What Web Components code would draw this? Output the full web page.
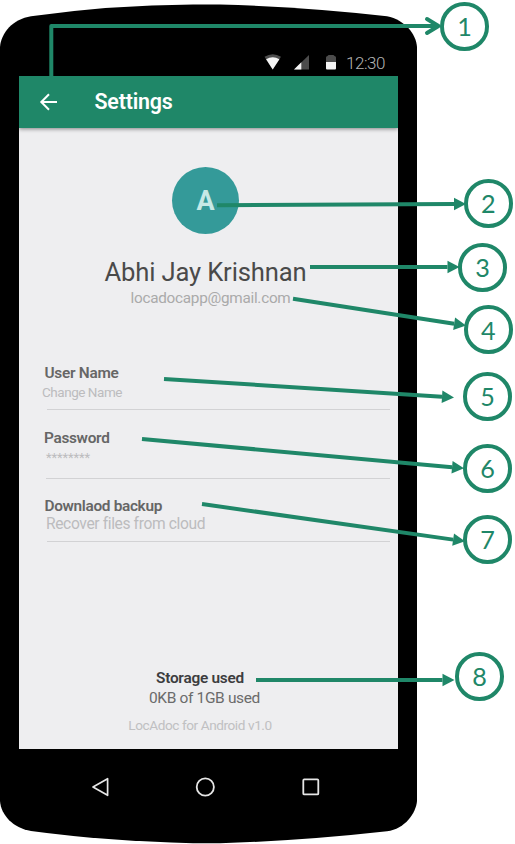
<!DOCTYPE html>
<html lang="en"><head><meta charset="utf-8"><title>Settings</title>
<style>
html,body{margin:0;background:#fff}
body{width:515px;height:844px;overflow:hidden;font-family:Roboto,"Noto Sans",sans-serif}
</style></head><body>
<settings-guide></settings-guide>
<script>
const define=(name,html,ready)=>customElements.define(name,class extends HTMLElement{
  connectedCallback(){
    if(this.shadowRoot)return;
    this.attachShadow({mode:'open'}).innerHTML=html;
    if(ready)ready.call(this);
  }
});
const ctx=document.createElement('canvas').getContext('2d');

/* One line of text tracked to a given width */
define('type-line',`<style>:host{display:block;white-space:nowrap;flex:none}</style><slot></slot>`,function(){
  const s=+this.getAttribute('size'),w=+this.getAttribute('width'),wt=this.getAttribute('weight')||400;
  const t=this.textContent;
  ctx.font=`${wt} ${s}px Roboto`;
  this.style.fontSize=s+'px';this.style.fontWeight=wt;
  if(w)this.style.letterSpacing=((w-ctx.measureText(t).width)/t.length).toFixed(3)+'px';
});

define('status-bar',`<style>
:host{display:flex;height:26px;align-items:center;justify-content:flex-end;box-sizing:border-box;padding-right:13px;color:#b4b4b4}
svg{display:block;flex:none;margin-right:6px}
type-line{line-height:26px}</style>
<svg width="76" height="26" viewBox="0 0 76 26">
<path d="M.5 6.8Q8.7 1.5 17 6.8L8.7 19.5Z" fill="#4c4c4c"/><path d="M2.1 9.2Q8.7 5.4 15.4 9.2L8.7 19.5Z" fill="#f4f4f4"/>
<path d="M30 19.5L45 5V19.5Z" fill="#4c4c4c"/><path d="M30 19.5L37.3 12.3V19.5Z" fill="#f4f4f4"/>
<path d="M62 12V7.5Q62 6 63.5 6Q64 5 65 5H69Q70 5 70.5 6Q72 6 72 7.5V12Z" fill="#4c4c4c"/><path d="M62 12H72V18.5Q72 19.5 71 19.5H63Q62 19.5 62 18.5Z" fill="#f4f4f4"/></svg>
<type-line size="17" weight="300" width="39">12:30</type-line>`);

define('app-bar',`<style>
:host{display:flex;height:52.5px;align-items:center;background:#1f8768;box-shadow:0 1px 4px rgba(0,0,0,.45);color:#fff;position:relative}
svg{display:block;margin:0 35.5px 0 20px}type-line{line-height:53px}</style>
<svg width="20" height="20" viewBox="0 0 20 20" fill="none" stroke="#fff" stroke-width="2"><path d="M18 10H3M10 2.3L2.3 10L10 17.7"/></svg>
<type-line size="21.4" weight="600" width="78">Settings</type-line>`);

define('user-profile',`<style>
:host{display:flex;flex-direction:column;align-items:center;padding:39px 6px 0 0}
.avatar{width:67.4px;height:67.4px;border-radius:50%;background:#349a99;display:flex;align-items:center;justify-content:center;color:#c6e9e6;font-size:27px;font-weight:700}
.name{margin-top:22.6px;line-height:30px;color:#4a4a4a}.mail{margin:1.4px 0 0 10px;line-height:20px;color:#aaa}</style>
<div class="avatar">A</div>
<type-line class="name" size="25.6" width="202">Abhi Jay Krishnan</type-line>
<type-line class="mail" size="15.3" width="160">locadocapp@gmail.com</type-line>`);

define('setting-row',`<style>
:host{display:block;margin-left:var(--rule,28px);margin-right:8px;border-bottom:1px solid #d2d2d4;color:#666;box-sizing:border-box}
::slotted([slot=title]){line-height:18px;margin-left:var(--title,-3px)}
::slotted([slot=hint]){line-height:18px;color:#bcbcbe;margin-left:var(--hint,0)}</style>
<slot name="title"></slot><slot name="hint"></slot>`);

define('storage-info',`<style>
:host{display:flex;flex-direction:column;align-items:center;padding-top:127px;line-height:18px}
type-line{line-height:18px}.a{color:#3c3c3e;margin-right:17px}.b{color:#6b6b6b;margin:2px 8px 9px 0}.c{color:#c0c0c2;margin-right:17px}</style>
<type-line class="a" size="15.4" weight="600" width="88">Storage used</type-line>
<type-line class="b" size="15.5" width="111">0KB of 1GB used</type-line>
<type-line class="c" size="13.6" width="143.5">LocAdoc for Android v1.0</type-line>`);

define('nav-bar',`<style>:host{display:flex;justify-content:space-between;padding:27px 77px 0 71px}svg{display:block}</style>
<svg width="20" height="22" viewBox="0 0 20 22" fill="none" stroke="#e6e6e6" stroke-width="1.7" stroke-linejoin="round"><path d="M17.6 2.7V19.3L3 11Z"/></svg>
<svg width="22" height="22" viewBox="0 0 22 22" fill="none" stroke="#e6e6e6" stroke-width="1.8"><circle cx="11.3" cy="11" r="8.6"/></svg>
<svg width="22" height="22" viewBox="0 0 22 22" fill="none" stroke="#e6e6e6" stroke-width="1.8"><rect x="4.3" y="3.4" width="15" height="15" rx="1"/></svg>`);

define('phone-frame',`<style>
:host{display:block;position:relative;width:417px;height:844px}
.body{position:absolute;inset:0}
.stack{position:relative;padding:49.5px 19px 0;display:flex;flex-direction:column}
.screen{height:673.5px;background:#eeeef0;display:flex;flex-direction:column}
.s1{margin-top:56px}.s2{padding-top:19px}.s3{padding-top:18px}
setting-row{flex:none}</style>
<svg class="body" width="417" height="844"><path d="M0 47C1 33 13 19 31 16.3Q110 5 193 4.5H220Q305 7 387 16.3C405 20 416 34 417 47V801C416 813 405 829 387 831.3Q300 841 220 843.2H193Q105 841 31 831C13 828 1 815 0 801Z"/></svg>
<div class="stack"><status-bar></status-bar>
<div class="screen"><app-bar></app-bar>
<user-profile></user-profile>
<setting-row class="s1" style="height:46px;--title:-2.5px;--hint:-5px"><type-line slot="title" size="15.4" weight="600" width="74">User Name</type-line><type-line slot="hint" size="13.5" width="80" style="padding-top:1px">Change Name</type-line></setting-row>
<setting-row class="s2" style="height:69px;--rule:27px;--title:-2px"><type-line slot="title" size="15.4" weight="600" width="65.5">Password</type-line><type-line slot="hint" size="13" width="44" style="padding-top:2px">********</type-line></setting-row>
<setting-row class="s3" style="height:63px;--title:-2.5px;--hint:-1px"><type-line slot="title" size="15.4" weight="600" width="117.5">Downlaod backup</type-line><type-line slot="hint" size="15.6" width="158.5">Recover files from cloud</type-line></setting-row>
<storage-info></storage-info></div>
<nav-bar></nav-bar></div>`);

/* Numbered circle pinned at cx, cy */
define('callout-badge',`<style>
:host{position:absolute;box-sizing:border-box;width:48.6px;height:48.6px;border:4px solid #1f8768;border-radius:50%;background:#fff;display:flex;align-items:center;justify-content:center;color:#1f8768;font:25.2px/30px Lato,sans-serif}
</style><slot></slot>`,function(){
  this.style.left=this.getAttribute('cx')-24.3+'px';this.style.top=this.getAttribute('cy')-24.3+'px';
});

define('settings-guide',`<style>
:host{display:block;position:relative;width:515px;height:844px}
.lines{position:absolute;left:0;top:0}</style>
<phone-frame></phone-frame>
<svg class="lines" width="515" height="844" fill="none" stroke="#1f8768" stroke-width="4">
<path d="M51.3 76V26H438" stroke-linejoin="round"/><path d="M427 19L438.5 26L427 33" stroke-linecap="round" stroke-linejoin="round"/>
<g id="arrows"></g></svg>
<callout-badge cx="464.5" cy="26.5">1</callout-badge><callout-badge cx="488.3" cy="203.5">2</callout-badge>
<callout-badge cx="482.5" cy="267.5">3</callout-badge><callout-badge cx="488.3" cy="329.7">4</callout-badge>
<callout-badge cx="487.5" cy="396.5">5</callout-badge><callout-badge cx="487.5" cy="468.5">6</callout-badge>
<callout-badge cx="487.5" cy="539.5">7</callout-badge><callout-badge cx="479.5" cy="676.5">8</callout-badge>`,function(){
  const arrows=[[217,205.2,466,204],[310,267,459.5,267],[293,298.7,466,325.5],[164,379,454,397.5],[142,439,464,468.3],[202,504,465,541.3],[256,680,454.5,680]];
  this.shadowRoot.getElementById('arrows').innerHTML=arrows.map(([a,b,c,d])=>{
    const l=Math.hypot(c-a,d-b),ux=(c-a)/l,uy=(d-b)/l,x=c-ux*12,y=d-uy*12;
    return `<path d="M${a} ${b}L${x} ${y}"/><path d="M${c} ${d}L${x-uy*6.3} ${y+ux*6.3}L${x+uy*6.3} ${y-ux*6.3}Z" fill="#1f8768" stroke="none"/>`;
  }).join('');
});
</script></body></html>
